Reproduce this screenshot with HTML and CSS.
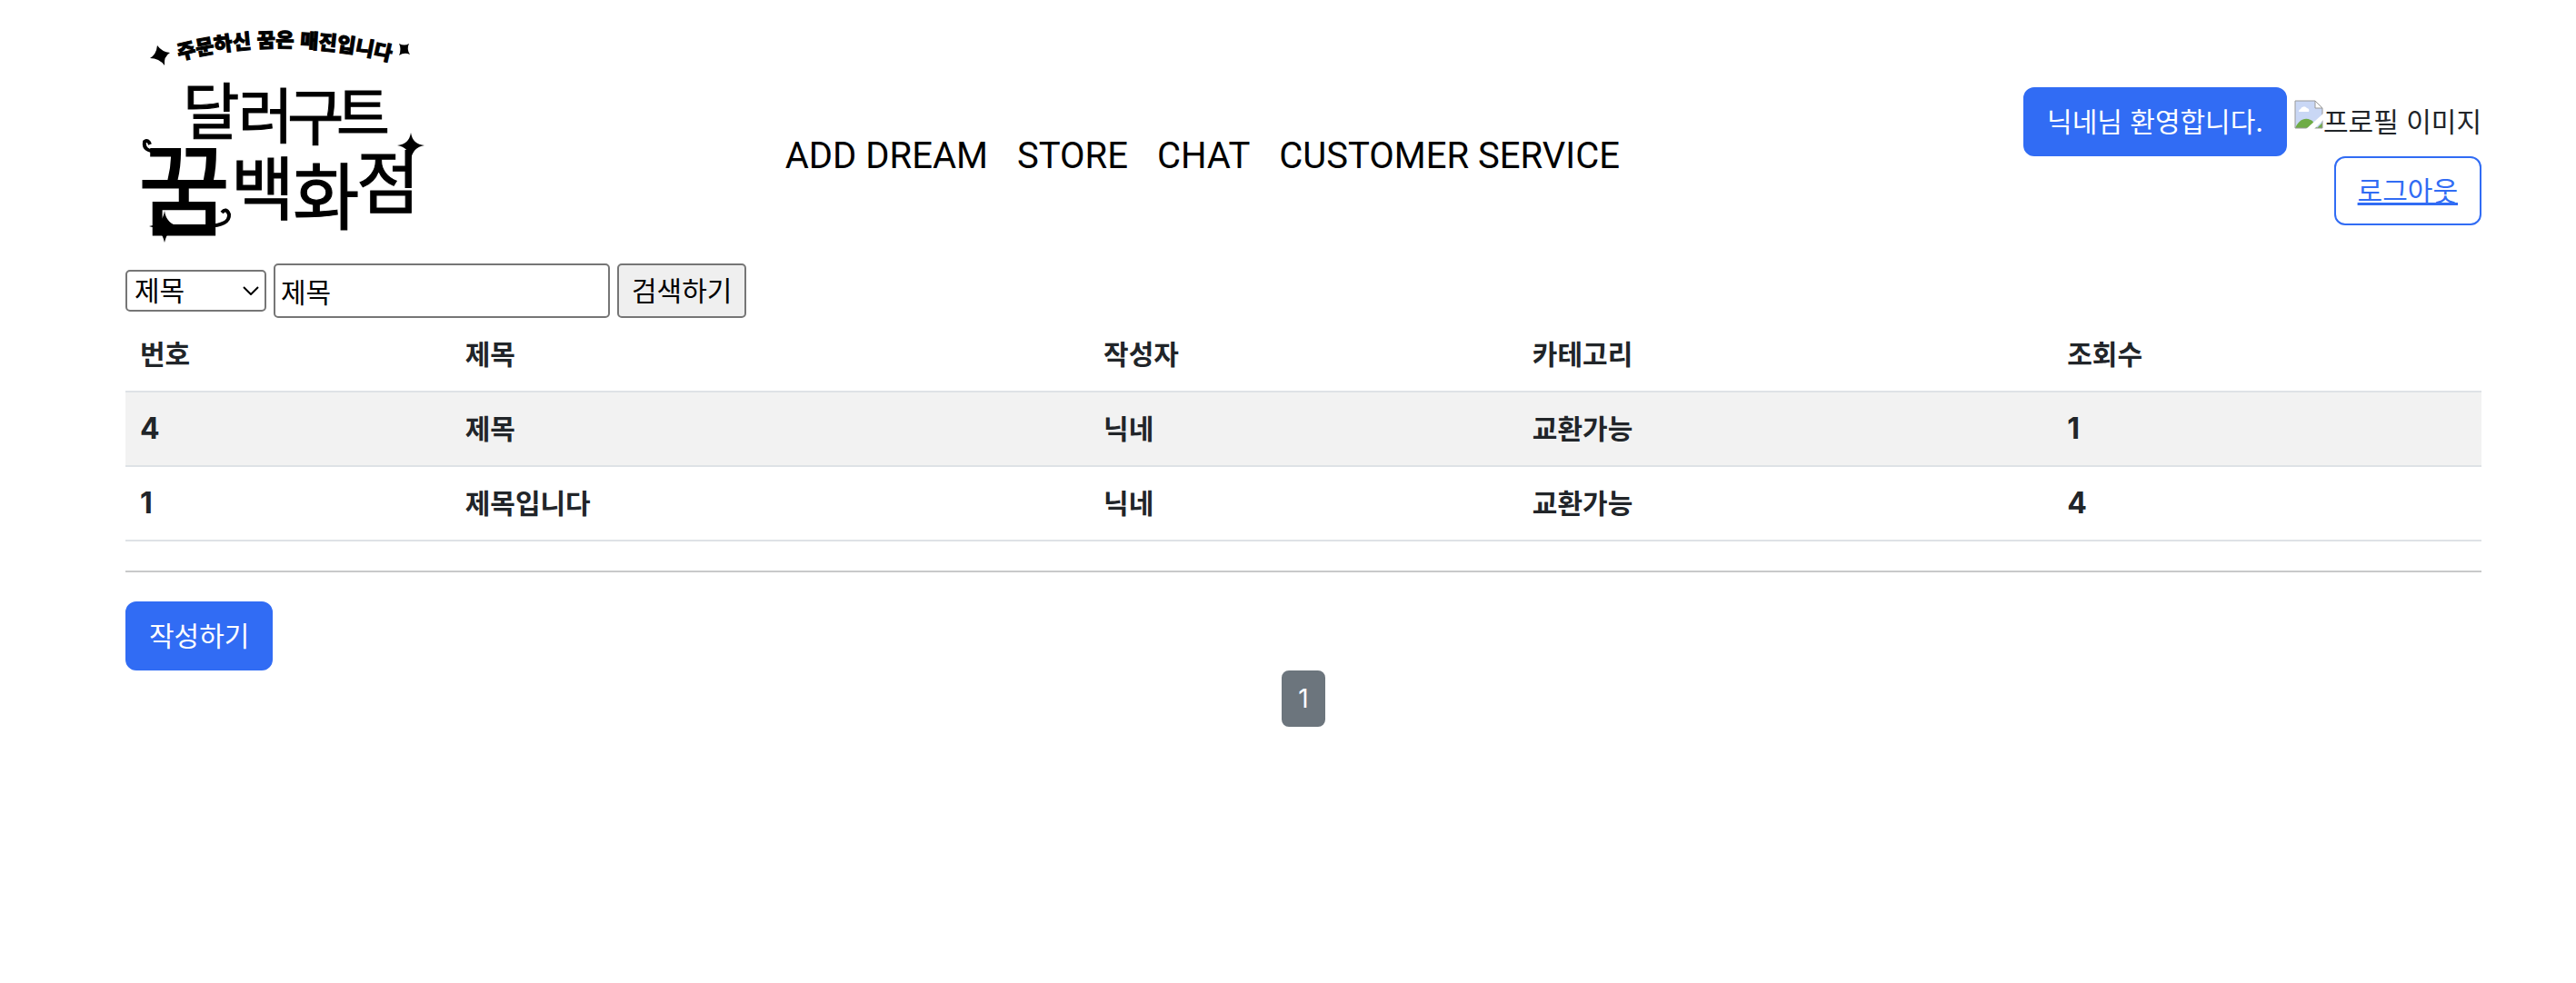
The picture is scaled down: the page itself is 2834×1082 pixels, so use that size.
FILE: index.html
```html
<!DOCTYPE html>
<html lang="ko">
<head>
<meta charset="utf-8">
<title>달러구트 꿈 백화점</title>
<link rel="stylesheet" href="styles.css">
</head>
<body>
<div class="container">
  <header class="header">
    <a class="logo" href="#" aria-label="달러구트 꿈 백화점">
      <svg class="logo-art" viewBox="8 0 330 280">
        <defs><path id="arc" d="M67 56 Q184 26 310 60"/></defs>
        <text class="logo-slogan"><textPath href="#arc">주문하신 꿈은 매진입니다</textPath></text>
        <g class="logo-name">
          <text x="71" y="138" font-size="68">달</text>
          <text x="132" y="142" font-size="66">러</text>
          <text x="186" y="144" font-size="68">구</text>
          <text x="240" y="138" font-size="64">트</text>
          <text class="logo-strong" x="22" y="241" font-size="110">꿈</text>
          <text x="124" y="226" font-size="76">백</text>
          <text x="192" y="236" font-size="80">화</text>
          <text x="262" y="219" font-size="76">점</text>
        </g>
        <path d="M43 40 Q48 47 57 48 Q50 52 51 62 Q45 54 35 54 Q42 50 43 40Z"/>
        <path d="M309 38 Q315 41 320 38 Q317 44 321 50 Q315 47 309 51 Q312 44 309 38Z"/>
        <path d="M322 136 Q324 149 337 150 Q324 152 322 166 Q320 152 307 150 Q320 149 322 136Z"/>
        <path d="M51 222 Q53 237 68 239 Q54 242 51 257 Q48 242 34 239 Q49 237 51 222Z"/>
        <path class="logo-curl" d="M35 149 Q33 143 29 146 Q27 157 44 157"/>
        <path class="logo-curl" d="M60 239 H98 Q123 238 122 226 Q119 218 114 224"/>
      </svg>
    </a>
    <nav class="nav">
      <a href="#">ADD DREAM</a>
      <a href="#">STORE</a>
      <a href="#">CHAT</a>
      <a href="#">CUSTOMER SERVICE</a>
    </nav>
    <div class="account">
      <button class="btn btn-primary" type="button">닉네님 환영합니다.</button>
      <span class="profile">
        <svg class="profile-icon" viewBox="0 0 32 32" aria-hidden="true">
          <path fill="#c9d7f5" d="M1 1H23L31 9V31H1Z"/>
          <path fill="#fff" d="M5 13a3 3 0 0 1 2-3a4 4 0 0 1 7-1a3 3 0 0 1 2 4Z"/>
          <path fill="#6fac46" d="M1 31C5 22 12 18 20 23L25 31Z"/>
          <path fill="#6fac46" d="M25 31L31 25V31Z"/>
          <path fill="none" stroke="#999" stroke-width="1" d="M1 31V1H23L31 9V31Z"/>
          <path fill="#fff" stroke="#999" d="M23 1V9H31Z"/>
          <path fill="#fff" d="M32 15V22L22 32H13Z"/>
        </svg><span>프로필 이미지</span>
      </span>
      <button class="btn btn-outline" type="button">로그아웃</button>
    </div>
  </header>

  <main>
    <form class="search">
      <span class="select-wrap">
        <select class="field select" aria-label="검색 조건">
          <option>제목</option>
        </select>
        <svg class="chevron" viewBox="0 0 18 10" aria-hidden="true"><path d="M1 1L9 9L17 1"/></svg>
      </span>
      <input class="field keyword" type="text" value="제목" aria-label="검색어">
      <button class="field submit" type="button">검색하기</button>
    </form>

    <table class="table">
      <colgroup>
        <col class="col-id"><col class="col-title"><col class="col-writer"><col class="col-category"><col>
      </colgroup>
      <thead>
        <tr><th>번호</th><th>제목</th><th>작성자</th><th>카테고리</th><th>조회수</th></tr>
      </thead>
      <tbody>
        <tr><td class="num">4</td><td>제목</td><td>닉네</td><td>교환가능</td><td class="num">1</td></tr>
        <tr><td class="num">1</td><td>제목입니다</td><td>닉네</td><td>교환가능</td><td class="num">4</td></tr>
      </tbody>
    </table>
    <hr class="rule">
    <button class="btn btn-primary" type="button">작성하기</button>
    <div class="pager"><button class="page" type="button">1</button></div>
  </main>
</div>
</body>
</html>
```
FILE: styles.css
```css
* {
  box-sizing: border-box;
}

body {
  margin: 0;
  background: #fff;
  color: #212529;
  font-family: Inter, "Noto Sans CJK KR", sans-serif;
  font-size: 30px;
  line-height: 48px;
}

button,
input,
select {
  margin: 0;
  font: inherit;
}

.container {
  padding: 10px 104px 0 138px;
}

.header {
  display: grid;
  grid-template-columns: 28% 1fr 20%;
  align-items: center;
}

.logo-art {
  display: block;
  width: 330px;
  height: 280px;
  fill: #000;
}

.logo-slogan {
  font-family: "Noto Sans CJK KR", sans-serif;
  font-size: 22px;
  font-weight: 900;
  stroke: #000;
  stroke-width: 1;
}

.logo-name {
  font-family: "Noto Sans CJK KR", sans-serif;
  font-weight: 400;
  stroke: #000;
  stroke-width: 1;
}

.logo-strong {
  stroke-width: 2;
}

.logo-curl {
  fill: none;
  stroke: #000;
  stroke-width: 4;
}

.nav {
  display: flex;
  gap: 32px;
  padding-top: 44px;
  font-family: Roboto, sans-serif;
  font-size: 40px;
}

.nav a {
  color: #000;
  text-decoration: none;
  white-space: nowrap;
}

.account {
  display: flex;
  flex-wrap: wrap;
  justify-content: flex-end;
  align-items: center;
  column-gap: 8px;
  padding-top: 44px;
}

.btn {
  display: block;
  padding: 12px 24px;
  border: 2px solid #316cf4;
  border-radius: 12px;
  line-height: 48px;
}

.btn-primary {
  background: #316cf4;
  color: #fff;
}

.btn-outline {
  background: transparent;
  color: #316cf4;
  text-decoration: underline;
}

.profile {
  display: flex;
  align-items: center;
}

.profile-icon {
  width: 32px;
  height: 32px;
  margin-bottom: 16px;
}

.search {
  display: flex;
  align-items: center;
  gap: 8px;
}

.field {
  border: 2px solid #767676;
  border-radius: 5px;
  background: #fff;
  color: #000;
}

.select-wrap {
  position: relative;
  display: flex;
}

.select {
  width: 155px;
  height: 46px;
  padding: 0 8px;
  appearance: none;
  line-height: 42px;
}

.chevron {
  position: absolute;
  top: 18px;
  right: 8px;
  width: 18px;
  height: 10px;
  fill: none;
  stroke: #000;
  stroke-width: 2;
  pointer-events: none;
}

.keyword {
  width: 370px;
  height: 60px;
  padding: 2px 6px;
}

.submit {
  height: 60px;
  padding: 2px 14px;
  background: #efefef;
}

.table {
  width: 100%;
  table-layout: fixed;
  border-collapse: separate;
  border-spacing: 0;
  font-weight: 700;
  text-align: left;
}

.col-id {
  width: 13.8%;
}

.col-title {
  width: 27.1%;
}

.col-writer {
  width: 18.2%;
}

.col-category {
  width: 22.7%;
}

.table th,
.table td {
  height: 82px;
  padding: 16px;
  border-bottom: 2px solid #dee2e6;
  line-height: 48px;
}

.table tbody tr:nth-child(odd) {
  background: #f2f2f2;
}

.table .num {
  font-size: 32px;
}

.rule {
  margin: 32px 0;
  border: 0;
  border-top: 2px solid #c8c9ca;
}

.pager {
  display: flex;
  justify-content: center;
}

.page {
  padding: 8px 16px;
  border: 2px solid #6c757d;
  border-radius: 8px;
  background: #6c757d;
  color: #fff;
  font-size: 28px;
  line-height: 42px;
}
```
